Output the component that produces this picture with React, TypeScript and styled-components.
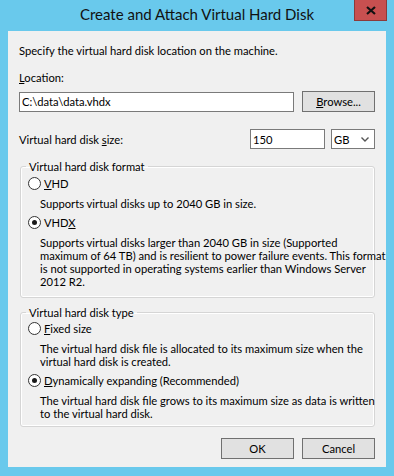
import React from "react";
import styled, { createGlobalStyle } from "styled-components";

const FONT = `Lato, "Liberation Sans", Arial, sans-serif`;

const GlobalStyle = createGlobalStyle`
	html, body {
		margin: 0;
		padding: 0;
		background: #69c9ec;
	}
	body {
		font-family: ${FONT};
		font-size: 11.2px;
		color: #000;
	}
`;

const Window = styled.div`
	width: 394px;
	height: 476px;
	box-sizing: border-box;
	background: #69c9ec;
	display: flex;
	flex-direction: column;
`;

const TitleBar = styled.div`
	height: 31px;
	flex: none;
	display: grid;
	grid-template-columns: 40px 1fr 40px;
	align-items: start;
`;

const Title = styled.div`
	grid-column: 2;
	text-align: center;
	font-size: 15px;
	line-height: 29px;
	color: #111;
	white-space: nowrap;
`;

const CloseButton = styled.button`
	grid-column: 3;
	justify-self: end;
	margin-right: 7px;
	width: 33px;
	height: 21px;
	padding: 0;
	box-sizing: border-box;
	border: 1px solid #8c3a3a;
	border-top: none;
	background: #c75050;
	display: flex;
	align-items: center;
	justify-content: center;
`;

const Client = styled.div`
	flex: 1;
	margin: 0 8px 9px;
	background: #f0f0f0;
	padding: 12px 11px 0;
	display: flex;
	flex-direction: column;
`;

const Text = styled.div<{ $top?: number }>`
	line-height: 15px;
	margin-top: ${p => p.$top ?? 0}px;
	white-space: nowrap;
`;

const Row = styled.div<{ $top: number }>`
	display: flex;
	align-items: center;
	margin-top: ${p => p.$top}px;
`;

const TextBox = styled.input<{ $width?: number }>`
	box-sizing: border-box;
	height: 20px;
	${p => (p.$width ? `width: ${p.$width}px;` : "flex: 1; min-width: 0;")}
	border: 1px solid #7a7a7a;
	background: #fff;
	padding: 0 2px;
	font: inherit;
	color: #000;
	outline: none;
`;

const Button = styled.button`
	box-sizing: border-box;
	width: 73px;
	height: 21px;
	border: 1px solid #707070;
	background: #e1e1e1;
	font: inherit;
	color: #000;
	padding: 0;
`;

const SizeLabel = styled.div`
	flex: 1;
	line-height: 15px;
`;

const Combo = styled.div`
	box-sizing: border-box;
	width: 44px;
	height: 20px;
	margin-left: 6px;
	border: 1px solid #7a7a7a;
	background: #fff;
	padding: 0 5px 0 2px;
	display: flex;
	align-items: center;
	justify-content: space-between;
`;

const Group = styled.fieldset<{ $top: number; $bottom: number }>`
	margin: ${p => p.$top}px 0 0 1px;
	padding: 0 0 ${p => p.$bottom}px 7px;
	border: 1px solid #d5d5d5;
	border-radius: 3px;
	box-shadow: inset 0 0 0 1px #fff;
	min-width: 0;
`;

const Legend = styled.legend`
	margin-left: -2px;
	padding: 0 3px;
	line-height: 15px;
`;

const RadioRow = styled.div<{ $top: number }>`
	display: flex;
	align-items: center;
	height: 15px;
	margin-top: ${p => p.$top}px;
	gap: 3px;
`;

const RadioCircle = styled.span<{ $checked?: boolean }>`
	box-sizing: border-box;
	width: 13px;
	height: 13px;
	border-radius: 50%;
	border: 1px solid #333;
	background: #fff;
	display: flex;
	align-items: center;
	justify-content: center;

	&::after {
		content: "";
		width: 5px;
		height: 5px;
		border-radius: 50%;
		background: #1a1a1a;
		display: ${p => (p.$checked ? "block" : "none")};
	}
`;

const Description = styled.div`
	margin: 6px 0 0 12px;
	line-height: 13px;
	white-space: nowrap;
`;

const ButtonBar = styled.div`
	display: flex;
	justify-content: flex-end;
	gap: 8px;
	margin-top: 11px;
`;

const Radio = ({ checked, top, children }: { checked?: boolean; top: number; children: React.ReactNode }) => (
	<RadioRow $top={top}>
		<RadioCircle $checked={checked} />
		<span>{children}</span>
	</RadioRow>
);

const App = () => {
	return (
		<>
			<GlobalStyle />
			<Window>
				<TitleBar>
					<Title>Create and Attach Virtual Hard Disk</Title>
					<CloseButton aria-label="Close">
						<svg width="10" height="9" viewBox="0 0 10 9">
							<path d="M1 1 L9 8 M9 1 L1 8" stroke="#111" strokeWidth="2.2" />
						</svg>
					</CloseButton>
				</TitleBar>
				<Client>
					<Text>Specify the virtual hard disk location on the machine.</Text>
					<Text $top={12}>
						<u>L</u>ocation:
					</Text>
					<Row $top={6}>
						<TextBox readOnly value={"C:\\data\\data.vhdx"} />
						<Button style={{ marginLeft: 8 }}>
							<u>B</u>rowse...
						</Button>
					</Row>
					<Row $top={17}>
						<SizeLabel>
							Virtual hard disk <u>s</u>ize:
						</SizeLabel>
						<TextBox readOnly value="150" $width={75} />
						<Combo>
							<span>GB</span>
							<svg width="8" height="5" viewBox="0 0 8 5">
								<path d="M0.5 0.5 L4 4 L7.5 0.5" fill="none" stroke="#555" strokeWidth="1.4" />
							</svg>
						</Combo>
					</Row>
					<Group $top={10} $bottom={9}>
						<Legend>Virtual hard disk format</Legend>
						<Radio top={2}>
							<u>V</u>HD
						</Radio>
						<Description>Supports virtual disks up to 2040 GB in size.</Description>
						<Radio top={5} checked>
							VHD<u>X</u>
						</Radio>
						<Description>
							Supports virtual disks larger than 2040 GB in size (Supported
							<br />
							maximum of 64 TB) and is resilient to power failure events. This format
							<br />
							is not supported in operating systems earlier than Windows Server
							<br />
							2012 R2.
						</Description>
					</Group>
					<Group $top={7} $bottom={6}>
						<Legend>Virtual hard disk type</Legend>
						<Radio top={1}>
							<u>F</u>ixed size
						</Radio>
						<Description>
							The virtual hard disk file is allocated to its maximum size when the
							<br />
							virtual hard disk is created.
						</Description>
						<Radio top={5} checked>
							<u>D</u>ynamically expanding (Recommended)
						</Radio>
						<Description>
							The virtual hard disk file grows to its maximum size as data is written
							<br />
							to the virtual hard disk.
						</Description>
					</Group>
					<ButtonBar>
						<Button>OK</Button>
						<Button>Cancel</Button>
					</ButtonBar>
				</Client>
			</Window>
		</>
	);
};

export default App;
